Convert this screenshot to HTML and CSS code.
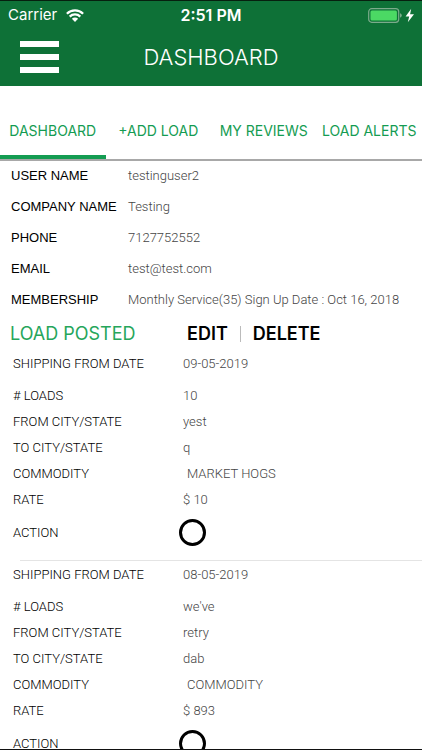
FILE: index.html
```html
<!DOCTYPE html>
<html lang="en">
<head>
<meta charset="utf-8">
<meta name="viewport" content="width=device-width, initial-scale=1">
<title>Dashboard</title>
<link rel="stylesheet" href="styles.css">
</head>
<body>
<div class="app">
  <header class="header">
    <div class="status">
      <div class="status-left">
        <span>Carrier</span>
        <svg class="wifi" viewBox="0 0 18 13" aria-hidden="true">
          <path d="M.9 4.7a11.6 11.6 0 0 1 16.2 0M3.7 7.6a7.6 7.6 0 0 1 10.6 0" fill="none" stroke="#fff" stroke-width="2.3"/>
          <path d="M9 13 5.9 9.8a4.4 4.4 0 0 1 6.2 0z" fill="#fff"/>
        </svg>
      </div>
      <time class="clock">2:51 PM</time>
      <div class="status-right">
        <svg class="battery" viewBox="0 0 46 15" aria-hidden="true">
          <rect x=".7" y=".7" width="30" height="13.6" rx="3" fill="none" stroke="#7bab8b" stroke-width="1.2"/>
          <rect x="2.5" y="2.5" width="26.4" height="10" rx="1.5" fill="#4bd964"/>
          <path d="M32 5.3q1.8.6 1.8 2.2T32 9.7z" fill="#7bab8b"/>
          <path d="M43.2.8 37.6 8.5h3.6L39.8 14.2l6.2-8h-3.9z" fill="#fff"/>
        </svg>
      </div>
    </div>
    <div class="titlebar">
      <button class="menu" type="button" aria-label="Menu">
        <svg viewBox="0 0 39 33" aria-hidden="true"><path d="M0 0h39v6H0zM0 13h39v6H0zM0 26h39v6H0z" fill="#fff"/></svg>
      </button>
      <h1 class="title">DASHBOARD</h1>
    </div>
  </header>

  <nav class="tabs">
    <a class="tab active" href="#dashboard">DASHBOARD</a>
    <a class="tab" href="#add">+ADD LOAD</a>
    <a class="tab" href="#reviews">MY REVIEWS</a>
    <a class="tab" href="#alerts">LOAD ALERTS</a>
  </nav>

  <main>
    <dl class="profile">
      <dt>USER NAME</dt><dd>testinguser2</dd>
      <dt>COMPANY NAME</dt><dd>Testing</dd>
      <dt>PHONE</dt><dd>7127752552</dd>
      <dt>EMAIL</dt><dd>test@test.com</dd>
      <dt>MEMBERSHIP</dt><dd>Monthly Service(35) Sign Up Date : Oct 16, 2018</dd>
    </dl>

    <div class="loads-head">
      <h2>LOAD POSTED</h2>
      <div class="actions">
        <button type="button">EDIT</button>
        <span class="divider"></span>
        <button type="button">DELETE</button>
      </div>
    </div>

    <section class="load">
      <dl>
        <div class="row date"><dt>SHIPPING FROM DATE</dt><dd>09-05-2019</dd></div>
        <div class="row"><dt># LOADS</dt><dd>10</dd></div>
        <div class="row"><dt>FROM CITY/STATE</dt><dd>yest</dd></div>
        <div class="row"><dt>TO CITY/STATE</dt><dd>q</dd></div>
        <div class="row"><dt>COMMODITY</dt><dd class="inset">MARKET HOGS</dd></div>
        <div class="row"><dt>RATE</dt><dd>$ 10</dd></div>
      </dl>
      <div class="row action"><label for="load-1">ACTION</label><input id="load-1" type="radio" name="load"></div>
    </section>

    <hr class="separator">

    <section class="load">
      <dl>
        <div class="row date"><dt>SHIPPING FROM DATE</dt><dd>08-05-2019</dd></div>
        <div class="row"><dt># LOADS</dt><dd>we've</dd></div>
        <div class="row"><dt>FROM CITY/STATE</dt><dd>retry</dd></div>
        <div class="row"><dt>TO CITY/STATE</dt><dd>dab</dd></div>
        <div class="row"><dt>COMMODITY</dt><dd class="inset">COMMODITY</dd></div>
        <div class="row"><dt>RATE</dt><dd>$ 893</dd></div>
      </dl>
      <div class="row action"><label for="load-2">ACTION</label><input id="load-2" type="radio" name="load"></div>
    </section>
  </main>
</div>
</body>
</html>
```

FILE: styles.css
```css
* {
  box-sizing: border-box;
}

body,
h1,
h2,
dl,
dd {
  margin: 0;
}

body {
  background: #fff;
  color: #000;
  font: 300 13px/26px Roboto, Arial, sans-serif;
}

button {
  padding: 0;
  border: 0;
  background: none;
  color: inherit;
  font: inherit;
}

.app {
  height: 100vh;
  overflow: hidden;
  border-bottom: 1px solid #111;
}

.header {
  padding-bottom: 8px;
  border-top: 1px solid #06200f;
  background: #0e7137;
  color: #fff;
  font-family: Inter, sans-serif;
}

.status {
  display: grid;
  grid-template-columns: 1fr auto 1fr;
  align-items: center;
  height: 28px;
  padding: 0 8px;
  font-size: 15px;
  font-weight: 400;
}

.status-left {
  display: flex;
  align-items: center;
  gap: 9px;
}

.status-right {
  display: flex;
  justify-content: flex-end;
}

.clock {
  font-size: 16px;
  font-weight: 600;
}

.wifi {
  width: 18px;
  height: 13px;
}

.battery {
  width: 46px;
  height: 15px;
}

.titlebar {
  display: grid;
  grid-template-columns: 1fr auto 1fr;
  align-items: center;
  height: 49px;
  padding: 7px 20px 0;
}

.menu,
.menu svg {
  display: block;
  width: 39px;
  height: 33px;
}

.title {
  font-size: 22px;
  font-weight: 300;
}

.tabs {
  display: grid;
  grid-template-columns: repeat(4, 1fr);
  height: 75px;
  border-bottom: 2px solid #a8a8a8;
  font-family: Inter, sans-serif;
  font-size: 14px;
  font-weight: 400;
}

.tab {
  display: flex;
  align-items: center;
  justify-content: center;
  padding-top: 20px;
  border-bottom: 4px solid transparent;
  color: #149c52;
  text-decoration: none;
  white-space: nowrap;
}

.tab.active {
  border-color: #149c52;
}

.profile {
  display: grid;
  grid-template-columns: 117px 1fr;
  margin-top: -1px;
  padding: 0 11px;
  line-height: 31px;
}

.profile dt {
  font: 400 13px/31px "Liberation Sans", Arial, sans-serif;
  white-space: nowrap;
}

dd {
  color: #444;
}

.loads-head {
  display: grid;
  grid-template-columns: 177px 1fr;
  align-items: center;
  height: 35px;
  padding: 2px 10px 0;
  font-family: Inter, sans-serif;
  font-size: 18px;
}

.loads-head h2 {
  color: #26a65b;
  font-size: 18px;
  font-weight: 400;
}

.actions {
  display: flex;
  align-items: center;
  gap: 12px;
  color: #000;
  font-weight: 600;
}

.divider {
  width: 1px;
  height: 16px;
  background: #bbb;
}

.load {
  padding-bottom: 8px;
}

.separator {
  height: 1px;
  margin: 0 0 0 20px;
  border: 0;
  background: #e4e4e4;
}

.row {
  display: grid;
  grid-template-columns: 170px 1fr;
  align-items: center;
  padding-left: 13px;
}

.date {
  margin-bottom: 6px;
  line-height: 27px;
}

.inset {
  padding-left: 4px;
}

.action {
  grid-template-columns: 166px 1fr;
  height: 39px;
}

.action input {
  appearance: none;
  width: 27px;
  height: 27px;
  margin: 0;
  border: 3px solid #000;
  border-radius: 50%;
}

.action input:checked {
  background: #000;
  box-shadow: inset 0 0 0 4px #fff;
}
```
